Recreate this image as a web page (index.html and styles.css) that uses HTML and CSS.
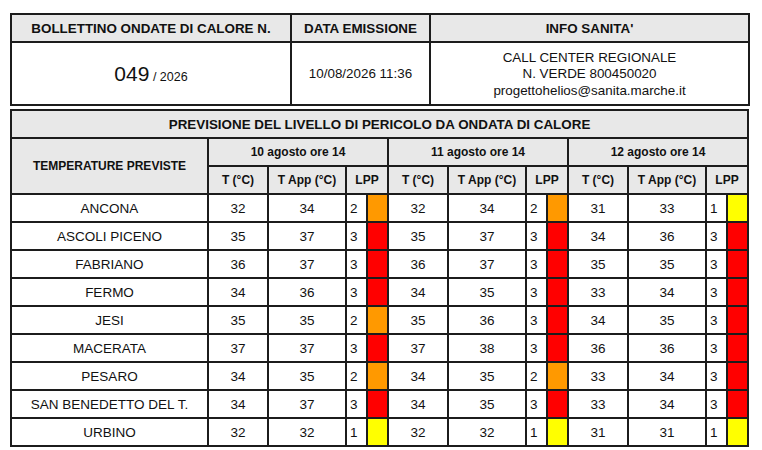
FILE: index.html
```html
<!DOCTYPE html>
<html>
<head>
<meta charset="utf-8">
<link rel="stylesheet" href="styles.css">
</head>
<body>
<div class="page">
<table class="info">
  <colgroup><col class="c1"><col class="c2"><col class="c3"></colgroup>
  <tr class="head">
    <th>BOLLETTINO ONDATE DI CALORE N.</th>
    <th>DATA EMISSIONE</th>
    <th>INFO SANITA'</th>
  </tr>
  <tr class="body">
    <td><span class="num">049</span><span class="year"> / 2026</span></td>
    <td class="date">10/08/2026 11:36</td>
    <td class="contact">CALL CENTER REGIONALE<br>N. VERDE 800450020<br>progettohelios@sanita.marche.it</td>
  </tr>
</table>

<table class="forecast">
  <colgroup>
    <col class="name">
    <col class="t"><col class="ta"><col class="l"><col class="sw">
    <col class="t"><col class="ta"><col class="l"><col class="sw">
    <col class="t"><col class="ta"><col class="l"><col class="sw">
  </colgroup>
  <tr class="title"><th colspan="13">PREVISIONE DEL LIVELLO DI PERICOLO DA ONDATA DI CALORE</th></tr>
  <tr class="hdr">
    <th rowspan="2" class="tp">TEMPERATURE PREVISTE</th>
    <th colspan="4">10 agosto ore 14</th>
    <th colspan="4">11 agosto ore 14</th>
    <th colspan="4">12 agosto ore 14</th>
  </tr>
  <tr class="hdr">
    <th>T (°C)</th><th>T App (°C)</th><th colspan="2">LPP</th>
    <th>T (°C)</th><th>T App (°C)</th><th colspan="2">LPP</th>
    <th>T (°C)</th><th>T App (°C)</th><th colspan="2">LPP</th>
  </tr>
  <tr><td>ANCONA</td><td>32</td><td>34</td><td class="n">2</td><td class="o"></td><td>32</td><td>34</td><td class="n">2</td><td class="o"></td><td>31</td><td>33</td><td class="n">1</td><td class="y"></td></tr>
  <tr><td>ASCOLI PICENO</td><td>35</td><td>37</td><td class="n">3</td><td class="r"></td><td>35</td><td>37</td><td class="n">3</td><td class="r"></td><td>34</td><td>36</td><td class="n">3</td><td class="r"></td></tr>
  <tr><td>FABRIANO</td><td>36</td><td>37</td><td class="n">3</td><td class="r"></td><td>36</td><td>37</td><td class="n">3</td><td class="r"></td><td>35</td><td>35</td><td class="n">3</td><td class="r"></td></tr>
  <tr><td>FERMO</td><td>34</td><td>36</td><td class="n">3</td><td class="r"></td><td>34</td><td>35</td><td class="n">3</td><td class="r"></td><td>33</td><td>34</td><td class="n">3</td><td class="r"></td></tr>
  <tr><td>JESI</td><td>35</td><td>35</td><td class="n">2</td><td class="o"></td><td>35</td><td>36</td><td class="n">3</td><td class="r"></td><td>34</td><td>35</td><td class="n">3</td><td class="r"></td></tr>
  <tr><td>MACERATA</td><td>37</td><td>37</td><td class="n">3</td><td class="r"></td><td>37</td><td>38</td><td class="n">3</td><td class="r"></td><td>36</td><td>36</td><td class="n">3</td><td class="r"></td></tr>
  <tr><td>PESARO</td><td>34</td><td>35</td><td class="n">2</td><td class="o"></td><td>34</td><td>35</td><td class="n">2</td><td class="o"></td><td>33</td><td>34</td><td class="n">3</td><td class="r"></td></tr>
  <tr><td>SAN BENEDETTO DEL T.</td><td>34</td><td>37</td><td class="n">3</td><td class="r"></td><td>34</td><td>35</td><td class="n">3</td><td class="r"></td><td>33</td><td>34</td><td class="n">3</td><td class="r"></td></tr>
  <tr><td>URBINO</td><td>32</td><td>32</td><td class="n">1</td><td class="y"></td><td>32</td><td>32</td><td class="n">1</td><td class="y"></td><td>31</td><td>31</td><td class="n">1</td><td class="y"></td></tr>
</table>
</div>
</body>
</html>
```

FILE: styles.css
```css
* { box-sizing: border-box; }
html, body { margin: 0; padding: 0; background: #fff; }
body {
  font-family: "Liberation Sans", Arial, sans-serif;
  color: #111;
}
.page {
  padding: 13px 0 0 10px;
  display: flex;
  flex-direction: column;
  gap: 3px;
}
table {
  border-collapse: collapse;
  table-layout: fixed;
  width: 738px;
}
th, td {
  border: 2px solid #1c1c1c;
  padding: 0;
  text-align: center;
  vertical-align: middle;
}
th { background: #e8e8e8; font-weight: bold; }

.info .c1 { width: 280px; }
.info .c2 { width: 139px; }
.info .c3 { width: 319px; }
.info .head th { height: 28px; font-size: 13.4px; }
.info .body td { height: 63px; font-size: 13.4px; }
.info .num { font-size: 21px; }
.info .year { font-size: 12.5px; }
.info .contact { font-size: 14px; line-height: 16.5px; padding-top: 2px; }

.forecast .name { width: 197px; }
.forecast .t { width: 60px; }
.forecast .ta { width: 78px; }
.forecast .l { width: 21px; }
.forecast .sw { width: 21px; }
.forecast tr { height: 28px; }
.forecast .title th { font-size: 13.4px; height: 27px; }
.forecast .hdr th { font-size: 12px; }
.forecast td { font-size: 13.5px; background: #fff; }
.forecast td.n { text-align: left; padding-left: 3px; }
.forecast td.o { background: #ff9900; }
.forecast td.r { background: #ff0000; }
.forecast td.y { background: #ffff00; }
```
